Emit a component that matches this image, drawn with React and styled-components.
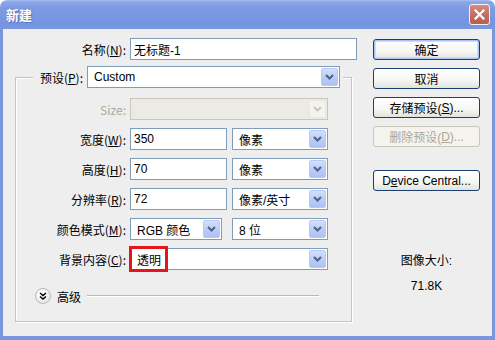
import React from 'react';
import styled, { createGlobalStyle } from 'styled-components';

const Global = createGlobalStyle`
  html, body { margin: 0; padding: 0; background: #ffffff; }
  body {
    font-family: "Liberation Sans", "Noto Sans CJK SC", sans-serif;
    font-size: 12px;
    color: #000;
  }
  * { box-sizing: border-box; }
`;

const Window = styled.div`
  width: 495px;
  height: 340px;
  display: flex;
  flex-direction: column;
  overflow: hidden;
`;

const TitleBar = styled.div`
  height: 29px;
  flex: none;
  display: flex;
  align-items: center;
  justify-content: space-between;
  padding: 0 5px 0 6px;
  border-radius: 7px 7px 0 0;
  background: linear-gradient(180deg, #a6bdf0 0px, #8aa6e8 2px, #7d9be3 8px, #7594df 24px, #7a98e0 29px);
`;

const Title = styled.span`
  color: #fff;
  font-weight: bold;
  font-size: 13px;
  font-family: "Noto Sans CJK SC", sans-serif;
  text-shadow: 1px 1px 0 #5a76c0;
`;

const CloseBtn = styled.div`
  width: 21px;
  height: 21px;
  border: 1px solid #f3f3f3;
  border-radius: 3px;
  background: linear-gradient(180deg, #d48c80 0%, #c66e60 50%, #b95e50 100%);
  display: flex;
  align-items: center;
  justify-content: center;
`;

const Frame = styled.div`
  flex: 1;
  display: flex;
  background: #eeeeee;
  border-left: 3px solid #7a96df;
  border-right: 3px solid #7a96df;
  border-bottom: 4px solid #7a96df;
  padding-top: 9px;
`;

const LeftCol = styled.div`
  width: 354px;
  display: flex;
  flex-direction: column;
`;

const Row = styled.div`
  display: flex;
  align-items: center;
  gap: 4px;
  height: 22px;
`;

const Label = styled.label`
  width: ${p => p.$w}px;
  flex: none;
  text-align: right;
  white-space: nowrap;
  font-family: "Noto Sans CJK SC", sans-serif;
  font-size: 12px;
  color: ${p => (p.$disabled ? '#aca899' : '#000')};
  u { text-decoration: underline; }
`;

const TextField = styled.div`
  width: ${p => (p.$w ? `${p.$w}px` : 'auto')};
  flex: ${p => (p.$w ? 'none' : '1')};
  height: 22px;
  border: 1px solid #7f9db9;
  background: #fff;
  display: flex;
  align-items: center;
  padding-left: 3px;
  font-family: "Liberation Sans", "Noto Sans CJK SC", sans-serif;
  font-size: 12px;
`;

const SelectBox = styled.div`
  position: relative;
  width: ${p => p.$w}px;
  flex: none;
  height: 22px;
  margin-left: ${p => p.$ml ?? 0}px;
  border: 1px solid ${p => (p.$disabled ? '#c9c7ba' : '#7f9db9')};
  background: ${p => (p.$disabled ? '#ebebe4' : '#fff')};
  display: flex;
  align-items: center;
  padding: 1px;
`;

const SelectValue = styled.span`
  flex: 1;
  padding-left: 5px;
  white-space: nowrap;
  font-family: "Liberation Sans", "Noto Sans CJK SC", sans-serif;
  font-size: 12px;
`;

const ArrowBtn = styled.span`
  width: 17px;
  height: 18px;
  flex: none;
  border-radius: 2px;
  display: flex;
  align-items: center;
  justify-content: center;
  background: ${p =>
    p.$disabled
      ? '#f4f3ee'
      : 'linear-gradient(180deg, #d2dffc 0%, #bccdf7 50%, #adc1f3 100%)'};
  border: 1px solid ${p => (p.$disabled ? '#e8e7e0' : '#b8c9f3')};
`;

const Highlight = styled.span`
  position: absolute;
  left: -2px;
  top: -3px;
  width: 39px;
  height: 26px;
  border: 3px solid #e8141b;
`;

const GroupBox = styled.fieldset`
  margin: 6px 5px 0 12px;
  padding: 10px 0 17px 0;
  border: 1px solid #c3c3c3;
  box-shadow: 1px 1px 0 #fff, inset 1px 1px 0 #fff;
  display: flex;
  flex-direction: column;
  gap: 8px;
`;

const Legend = styled.legend`
  margin-left: 17px;
  padding: 0 3px 0 4px;
  background: #eeeeee;
`;

const LegendInner = styled.div`
  display: flex;
  align-items: center;
  gap: 4px;
  height: 22px;
`;

const AdvancedRow = styled.div`
  display: flex;
  align-items: center;
  margin-top: 10px;
  padding-left: 19px;
  height: 16px;
`;

const Toggle = styled.span`
  width: 16px;
  height: 16px;
  border-radius: 50%;
  border: 1px solid #b9b9b9;
  background: radial-gradient(circle at 40% 35%, #ffffff 0%, #f2f2f2 50%, #d6d6d6 100%);
  display: flex;
  align-items: center;
  justify-content: center;
`;

const AdvText = styled.span`
  margin-left: 6px;
  font-family: "Noto Sans CJK SC", sans-serif;
  font-size: 12px;
`;

const Rule = styled.span`
  margin-left: 6px;
  width: 232px;
  height: 2px;
  border-top: 1px solid #b8b8b8;
  border-bottom: 1px solid #fff;
`;

const RightCol = styled.div`
  margin-left: 16px;
  width: 107px;
  padding-top: 1px;
  display: flex;
  flex-direction: column;
  align-items: center;
`;

const Button = styled.div`
  width: 107px;
  height: 21px;
  margin-top: ${p => p.$mt ?? 0}px;
  border: 1px solid ${p => (p.$disabled ? '#c9c7ba' : '#1c3f73')};
  border-radius: 3px;
  background: ${p =>
    p.$disabled ? '#f4f3ee' : 'linear-gradient(180deg, #ffffff 0%, #f6f6f3 60%, #e3e2da 100%)'};
  box-shadow: ${p => (p.$default ? 'inset 0 0 0 1px #a9c4f3, inset 0 0 0 2px #cfdcf7' : 'none')};
  display: flex;
  align-items: center;
  justify-content: center;
  color: ${p => (p.$disabled ? '#aca899' : '#000')};
  font-family: "Liberation Sans", "Noto Sans CJK SC", sans-serif;
  font-size: 12px;
  white-space: nowrap;
`;

const InfoLabel = styled.div`
  margin-top: ${p => p.$mt}px;
  font-family: "Liberation Sans", "Noto Sans CJK SC", sans-serif;
  font-size: 12px;
  line-height: 14px;
`;

const Chevron = ({ disabled }) => (
  <svg width="9" height="6" viewBox="0 0 9 6">
    <path d="M1 1 L4.5 4.5 L8 1" fill="none" stroke={disabled ? '#c9c7ba' : '#4d6185'} strokeWidth="2" />
  </svg>
);

const Select = ({ w, value, disabled, highlight, ml }) => (
  <SelectBox $w={w} $disabled={disabled} $ml={ml}>
    <SelectValue>{value}</SelectValue>
    <ArrowBtn $disabled={disabled}>
      <Chevron disabled={disabled} />
    </ArrowBtn>
    {highlight && <Highlight />}
  </SelectBox>
);

const FieldRow = ({ label, children, disabled }) => (
  <Row>
    <Label $w={110} $disabled={disabled}>{label}</Label>
    {children}
  </Row>
);

export default function App() {
  return (
    <>
      <Global />
      <Window>
        <TitleBar>
          <Title>新建</Title>
          <CloseBtn>
            <svg width="11" height="11" viewBox="0 0 11 11">
              <path d="M1.5 1.5 L9.5 9.5 M9.5 1.5 L1.5 9.5" stroke="#fff" strokeWidth="2.2" strokeLinecap="square" />
            </svg>
          </CloseBtn>
        </TitleBar>
        <Frame>
          <LeftCol>
            <Row>
              <Label $w={123}>名称(<u>N</u>):</Label>
              <TextField>无标题-1</TextField>
            </Row>
            <GroupBox>
              <Legend>
                <LegendInner>
                  <Label $w={46}>预设(<u>P</u>):</Label>
                  <Select w={253} value="Custom" />
                </LegendInner>
              </Legend>
              <FieldRow label="Size:" disabled>
                <Select w={198} value="" disabled />
              </FieldRow>
              <FieldRow label={<>宽度(<u>W</u>):</>}>
                <TextField $w={97}>350</TextField>
                <Select w={96} value="像素" ml={1} />
              </FieldRow>
              <FieldRow label={<>高度(<u>H</u>):</>}>
                <TextField $w={97}>70</TextField>
                <Select w={96} value="像素" ml={1} />
              </FieldRow>
              <FieldRow label={<>分辨率(<u>R</u>):</>}>
                <TextField $w={97}>72</TextField>
                <Select w={96} value="像素/英寸" ml={1} />
              </FieldRow>
              <FieldRow label={<>颜色模式(<u>M</u>):</>}>
                <Select w={92} value="RGB 颜色" />
                <Select w={96} value="8 位" ml={6} />
              </FieldRow>
              <FieldRow label={<>背景内容(<u>C</u>):</>}>
                <Select w={198} value="透明" highlight />
              </FieldRow>
              <AdvancedRow>
                <Toggle>
                  <svg width="8" height="8" viewBox="0 0 8 8">
                    <path d="M1 1 L4 3.5 L7 1 M1 4.5 L4 7 L7 4.5" fill="none" stroke="#000" strokeWidth="1.4" />
                  </svg>
                </Toggle>
                <AdvText>高级</AdvText>
                <Rule />
              </AdvancedRow>
            </GroupBox>
          </LeftCol>
          <RightCol>
            <Button $default>确定</Button>
            <Button $mt={8}>取消</Button>
            <Button $mt={8}>存储预设(<u>S</u>)...</Button>
            <Button $mt={8} $disabled>删除预设(<u>D</u>)...</Button>
            <Button $mt={23}>D<u>e</u>vice Central...</Button>
            <InfoLabel $mt={63}>图像大小:</InfoLabel>
            <InfoLabel $mt={11}>71.8K</InfoLabel>
          </RightCol>
        </Frame>
      </Window>
    </>
  );
}
